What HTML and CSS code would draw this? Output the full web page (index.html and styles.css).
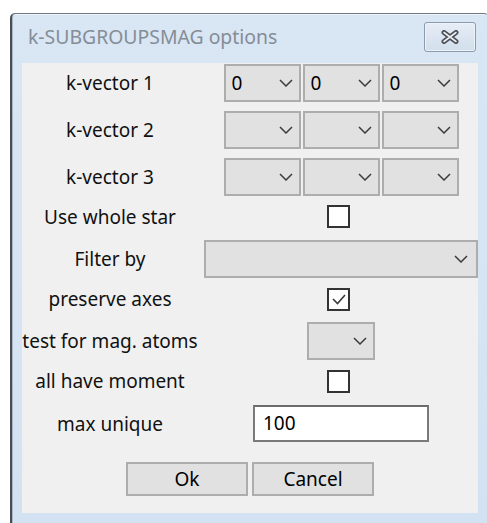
FILE: index.html
```html
<!DOCTYPE html>
<html>
<head>
<meta charset="utf-8">
<title>k-SUBGROUPSMAG options</title>
<link rel="stylesheet" href="styles.css">
</head>
<body>
<div class="window">
  <div class="titlebar">
    <span class="title">k-SUBGROUPSMAG options</span>
    <button class="close" aria-label="Close">
      <svg width="20" height="14" viewBox="0 0 20 14">
        <path d="M4 2.5 L16 11.5 M16 2.5 L4 11.5" stroke="#4b4f55" stroke-width="5" stroke-linecap="round" fill="none"/>
        <path d="M4 2.5 L16 11.5 M16 2.5 L4 11.5" stroke="#e9edf2" stroke-width="1.6" stroke-linecap="round" fill="none"/>
      </svg>
    </button>
  </div>
  <div class="client">
    <div class="form">
      <span class="label">k-vector 1</span>
      <div class="kvec">
        <div class="combo"><span class="value">0</span><svg class="chev" width="14" height="8" viewBox="0 0 14 8"><polyline points="1,1 7,7 13,1"/></svg></div>
        <div class="combo"><span class="value">0</span><svg class="chev" width="14" height="8" viewBox="0 0 14 8"><polyline points="1,1 7,7 13,1"/></svg></div>
        <div class="combo"><span class="value">0</span><svg class="chev" width="14" height="8" viewBox="0 0 14 8"><polyline points="1,1 7,7 13,1"/></svg></div>
      </div>

      <span class="label">k-vector 2</span>
      <div class="kvec">
        <div class="combo"><span class="value"></span><svg class="chev" width="14" height="8" viewBox="0 0 14 8"><polyline points="1,1 7,7 13,1"/></svg></div>
        <div class="combo"><span class="value"></span><svg class="chev" width="14" height="8" viewBox="0 0 14 8"><polyline points="1,1 7,7 13,1"/></svg></div>
        <div class="combo"><span class="value"></span><svg class="chev" width="14" height="8" viewBox="0 0 14 8"><polyline points="1,1 7,7 13,1"/></svg></div>
      </div>

      <span class="label">k-vector 3</span>
      <div class="kvec">
        <div class="combo"><span class="value"></span><svg class="chev" width="14" height="8" viewBox="0 0 14 8"><polyline points="1,1 7,7 13,1"/></svg></div>
        <div class="combo"><span class="value"></span><svg class="chev" width="14" height="8" viewBox="0 0 14 8"><polyline points="1,1 7,7 13,1"/></svg></div>
        <div class="combo"><span class="value"></span><svg class="chev" width="14" height="8" viewBox="0 0 14 8"><polyline points="1,1 7,7 13,1"/></svg></div>
      </div>

      <span class="label">Use whole star</span>
      <span class="check"></span>

      <span class="label">Filter by</span>
      <div class="combo wide"><span class="value"></span><svg class="chev" width="14" height="8" viewBox="0 0 14 8"><polyline points="1,1 7,7 13,1"/></svg></div>

      <span class="label">preserve axes</span>
      <span class="check">
        <svg width="18" height="18" viewBox="0 0 18 18"><polyline points="3,9 7.5,13.5 15,5" fill="none" stroke="#3a3a3a" stroke-width="1.6"/></svg>
      </span>

      <span class="label">test for mag. atoms</span>
      <div class="combo small"><span class="value"></span><svg class="chev" width="14" height="8" viewBox="0 0 14 8"><polyline points="1,1 7,7 13,1"/></svg></div>

      <span class="label">all have moment</span>
      <span class="check"></span>

      <span class="label">max unique</span>
      <div class="textbox">100</div>
    </div>

    <div class="buttons">
      <button class="btn">Ok</button>
      <button class="btn">Cancel</button>
    </div>
  </div>
</div>
</body>
</html>
```

FILE: styles.css
```css
html, body {
  margin: 0;
  padding: 0;
  background: #ffffff;
  overflow: hidden;
  width: 487px;
  height: 523px;
}

.window {
  margin: 13px 0 0 10px;
  width: 477px;
  height: 530px;
  background: linear-gradient(#d9e6f4, #d3e2f2);
  border-left: 2px solid #4a4d52;
  border-top: 1px solid #6e7782;
  border-radius: 5px 5px 0 0;
  box-shadow: inset 1px 0 0 #a9b6c4, inset 0 1px 0 #eef4fa;
  font-family: "Noto Sans", "Open Sans", sans-serif;
}

.titlebar {
  display: flex;
  align-items: center;
  height: 49px;
  padding: 0 13px 0 16px;
}

.title {
  flex: 1;
  font-size: 19.4px;
  color: #858d96;
  padding-bottom: 4px;
}

.close {
  width: 52px;
  height: 30px;
  margin-bottom: 4px;
  padding: 0;
  display: flex;
  align-items: center;
  justify-content: center;
  border: 1px solid #8c9aad;
  border-radius: 3px;
  background: linear-gradient(#e6edf6, #d2deec);
  box-shadow: inset 0 0 0 1px #eef3f9;
}

.client {
  margin-left: 10px;
  width: 456px;
  height: 450px;
  background: #f0f0f0;
}

.form {
  display: grid;
  grid-template-columns: 176px 274px;
  grid-template-rows: 40px 54px 40px 39px 46px 34px 50px 30px 55px;
  column-gap: 6px;
  align-items: center;
}

.label {
  justify-self: center;
  font-size: 19px;
  color: #111;
  white-space: nowrap;
}

.kvec {
  justify-self: center;
  display: flex;
  gap: 2px;
}

.combo {
  box-sizing: border-box;
  width: 77px;
  height: 38px;
  display: flex;
  align-items: center;
  justify-content: space-between;
  padding: 0 6px 0 6px;
  background: #e1e1e1;
  border: 2px solid #adadad;
  font-size: 19px;
  color: #000;
}

.combo.wide {
  width: 274px;
  padding-right: 8px;
}

.combo.small {
  width: 68px;
  justify-self: center;
  padding-right: 6px;
}

.chev polyline {
  fill: none;
  stroke: #3c3c3c;
  stroke-width: 1.5;
}

.check {
  justify-self: center;
  margin-right: 5px;
  box-sizing: border-box;
  width: 23px;
  height: 23px;
  border: 2px solid #333333;
  background: #ffffff;
  display: flex;
  align-items: center;
  justify-content: center;
}

.textbox {
  justify-self: center;
  box-sizing: border-box;
  width: 176px;
  height: 37px;
  border: 2px solid #7a7a7a;
  border-top-color: #6c6c6c;
  background: #ffffff;
  padding: 0 8px;
  font-size: 19px;
  line-height: 33px;
  color: #000;
}

.buttons {
  display: flex;
  justify-content: center;
  gap: 4px;
  margin-top: 11px;
}

.btn {
  box-sizing: border-box;
  width: 122px;
  height: 34px;
  padding: 0;
  background: #e1e1e1;
  border: 2px solid #adadad;
  font-family: "Noto Sans", "Open Sans", sans-serif;
  font-size: 19px;
  color: #000;
}
```
